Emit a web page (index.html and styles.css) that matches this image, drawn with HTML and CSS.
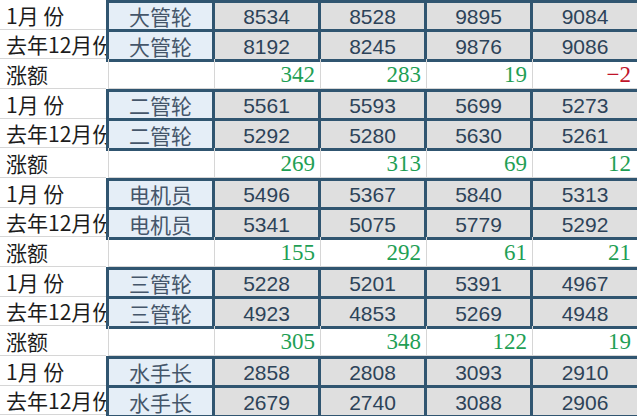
FILE: index.html
```html
<!DOCTYPE html>
<html lang="zh-CN">
<head>
<meta charset="utf-8">
<title>工资对比</title>
<link rel="stylesheet" href="styles.css">
</head>
<body>
<div class="sheet">
  <section class="block">
    <div class="lbl">1月 份</div>
    <div class="lbl">去年12月份</div>
    <div class="lbl">涨额</div>
    <div class="data">
      <div class="pos">大管轮</div><div class="num">8534</div><div class="num">8528</div><div class="num">9895</div><div class="num">9084</div>
      <div class="pos">大管轮</div><div class="num">8192</div><div class="num">8245</div><div class="num">9876</div><div class="num">9086</div>
    </div>
    <div class="diff"><div></div><div class="up">342</div><div class="up">283</div><div class="up">19</div><div class="down">−2</div></div>
  </section>
  <section class="block">
    <div class="lbl">1月 份</div>
    <div class="lbl">去年12月份</div>
    <div class="lbl">涨额</div>
    <div class="data">
      <div class="pos">二管轮</div><div class="num">5561</div><div class="num">5593</div><div class="num">5699</div><div class="num">5273</div>
      <div class="pos">二管轮</div><div class="num">5292</div><div class="num">5280</div><div class="num">5630</div><div class="num">5261</div>
    </div>
    <div class="diff"><div></div><div class="up">269</div><div class="up">313</div><div class="up">69</div><div class="up">12</div></div>
  </section>
  <section class="block">
    <div class="lbl">1月 份</div>
    <div class="lbl">去年12月份</div>
    <div class="lbl">涨额</div>
    <div class="data">
      <div class="pos">电机员</div><div class="num">5496</div><div class="num">5367</div><div class="num">5840</div><div class="num">5313</div>
      <div class="pos">电机员</div><div class="num">5341</div><div class="num">5075</div><div class="num">5779</div><div class="num">5292</div>
    </div>
    <div class="diff"><div></div><div class="up">155</div><div class="up">292</div><div class="up">61</div><div class="up">21</div></div>
  </section>
  <section class="block">
    <div class="lbl">1月 份</div>
    <div class="lbl">去年12月份</div>
    <div class="lbl">涨额</div>
    <div class="data">
      <div class="pos">三管轮</div><div class="num">5228</div><div class="num">5201</div><div class="num">5391</div><div class="num">4967</div>
      <div class="pos">三管轮</div><div class="num">4923</div><div class="num">4853</div><div class="num">5269</div><div class="num">4948</div>
    </div>
    <div class="diff"><div></div><div class="up">305</div><div class="up">348</div><div class="up">122</div><div class="up">19</div></div>
  </section>
  <section class="block last">
    <div class="lbl">1月 份</div>
    <div class="lbl">去年12月份</div>
    <div class="data">
      <div class="pos">水手长</div><div class="num">2858</div><div class="num">2808</div><div class="num">3093</div><div class="num">2910</div>
      <div class="pos">水手长</div><div class="num">2679</div><div class="num">2740</div><div class="num">3088</div><div class="num">2906</div>
    </div>
  </section>
</div>
</body>
</html>
```
FILE: styles.css
```css
html, body {
  margin: 0;
  padding: 0;
  overflow: hidden;
  background: #ffffff;
}

body {
  width: 637px;
  height: 416px;
  font-family: "Noto Sans CJK SC", "Noto Sans", sans-serif;
}

.sheet {
  width: 660px;
}

.block {
  display: grid;
  grid-template-columns: 107.5px 552.5px;
  grid-template-rows: repeat(3, 1fr);
  height: 89px;
}

.block.last {
  grid-template-rows: repeat(2, 1fr);
  height: 59.33px;
}

.lbl {
  grid-column: 1;
  margin-right: 1.5px;
  border-bottom: 1px solid #d6d6d6;
  overflow: hidden;
  white-space: nowrap;
  font-size: 21px;
  line-height: 1;
  color: #1c1c1c;
  padding-left: 6px;
  padding-top: 2px;
  display: flex;
  align-items: center;
}

.data {
  grid-column: 2;
  grid-row: 1 / span 2;
  margin: -0.5px -1.5px -2.5px -1.5px;
  padding: 3px;
  background: #305570;
  display: grid;
  grid-template-columns: repeat(4, 103px) 1fr;
  grid-template-rows: 1fr 1fr;
  gap: 3px;
}

.data > div {
  display: flex;
  align-items: center;
  justify-content: center;
  line-height: 1;
  font-size: 21px;
  padding-top: 2px;
}

.data > div:nth-child(5n) {
  padding-right: 21.5px;
}

.pos {
  background: #e5eef7;
  color: #45566a;
}

.num {
  background: #dfdfdf;
  color: #2d4359;
  font-family: "Liberation Sans", Arial, sans-serif;
}

.diff {
  grid-column: 2;
  grid-row: 3;
  display: grid;
  grid-template-columns: repeat(4, 106px) 1fr;
  border-bottom: 1px solid #d6d6d6;
}

.diff > div {
  border-left: 1px solid #d6d6d6;
  display: flex;
  align-items: center;
  justify-content: flex-end;
  padding-right: 4.5px;
  padding-top: 2px;
  font-family: "Liberation Serif", "Times New Roman", serif;
  font-size: 23px;
  line-height: 1;
}

.diff > div:nth-child(5) {
  padding-right: 29px;
}

.up {
  color: #1f9f55;
}

.down {
  color: #c0142a;
}
```
